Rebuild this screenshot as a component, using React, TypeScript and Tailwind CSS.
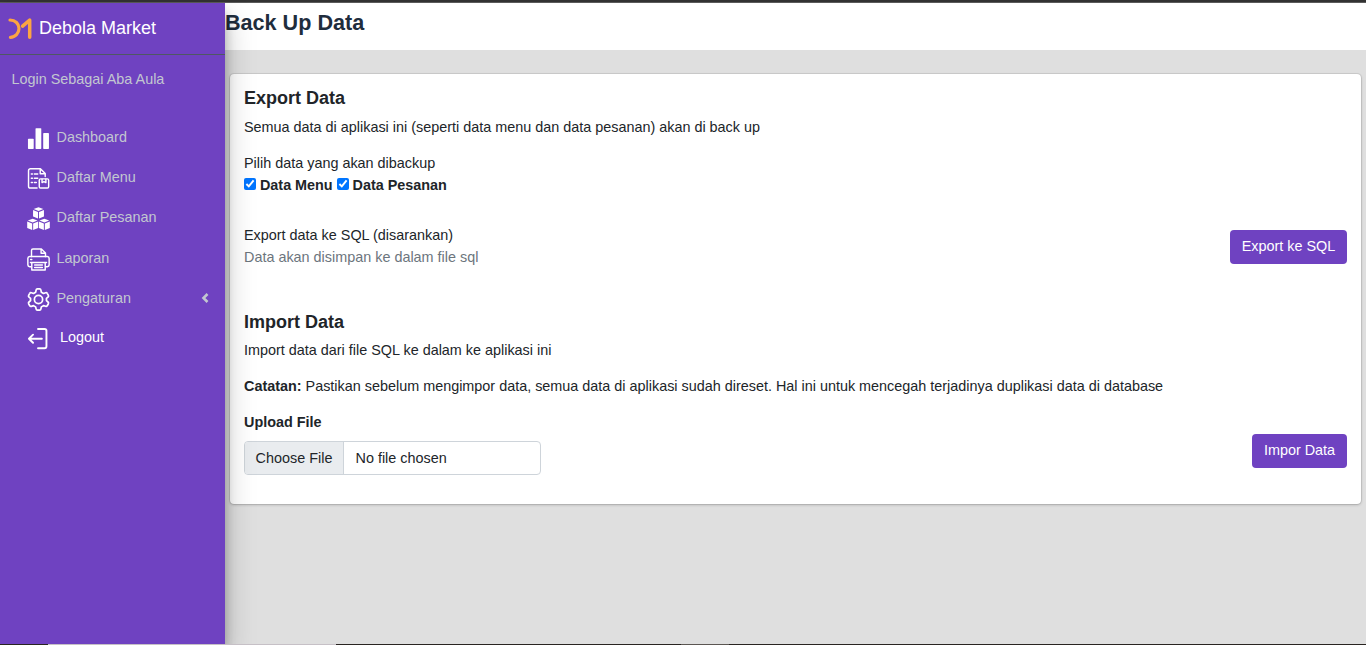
import type { ReactNode } from "react";

const svgProps = {
  width: 23,
  height: 23,
  viewBox: "0 0 24 24",
  fill: "none",
  stroke: "#fff",
  strokeLinecap: "round" as const,
  strokeLinejoin: "round" as const,
};

function Logo() {
  return (
    <svg width="24" height="22" viewBox="0 0 24 22" fill="none" stroke="#fca542" strokeWidth="3.5" strokeLinecap="round" strokeLinejoin="round">
      <path d="M2 2 C7.300 2 11 5.800 11 10.500 S7.300 19.300 2.400 19.300" strokeWidth="3.200" />
      <path d="M14.600 8.200 L21.700 2.200 V19.200" />
    </svg>
  );
}

function ChartIcon() {
  return (
    <svg {...svgProps} fill="#fff" stroke="none">
      <rect x="1" y="12.3" width="6" height="10.7" rx=".7" />
      <rect x="8.900" y="1.200" width="6" height="21.800" rx=".7" />
      <rect x="16.900" y="6.300" width="6" height="16.700" rx=".7" />
    </svg>
  );
}

function MenuListIcon() {
  return (
    <svg {...svgProps} strokeWidth="1.5">
      <path d="M10.500 22H3.600a2 2 0 0 1-2-2V3.800a2 2 0 0 1 2-2H14l5 5V10M13.800 2.100V7H18.800" />
      <path d="M4.500 7.300h1.200M7.700 7.300h3.500M4.500 11.700h1.200M7.700 11.700h3.500M4.500 16.200h1.200M7.700 16.200h2" />
      <rect x="12.800" y="12.400" width="9.800" height="9.600" rx="1.300" />
      <path d="M15.700 12.700v3.600l2-1.100 2 1.100v-3.600" />
    </svg>
  );
}

function Cube({ x, y }: { x: number; y: number }) {
  return (
    <g transform={`translate(${x} ${y})`}>
      <path d="M5.700 0 10.800 2 5.700 4.100.6 2z" />
      <path d="M0 3 5.200 5V11.800L0 9.800z" />
      <path d="M11.400 3 6.200 5V11.800L11.400 9.800z" />
    </g>
  );
}

function CubesIcon() {
  return (
    <svg {...svgProps} fill="#fff" stroke="none">
      <Cube x={6.3} y={0.2} />
      <Cube x={0.2} y={12.2} />
      <Cube x={12.4} y={12.2} />
    </svg>
  );
}

function PrinterIcon() {
  return (
    <svg {...svgProps} strokeWidth="1.5">
      <path d="M4.700 9V2.600a1.500 1.500 0 0 1 1.500-1.500H15L19.300 5.200V9M14.700 1.300V5.500H19" />
      <path d="M4.500 19.500H2.800A2 2 0 0 1 .9 17.600V10.800A2 2 0 0 1 2.800 8.900H21.200A2 2 0 0 1 23.100 10.800V17.600A2 2 0 0 1 21.200 19.500H19.400" />
      <path d="M3.600 15.200H20.400M5 15.200V23H19V15.200M8 17.800H16M8 20.400H16M3.800 12H5" />
    </svg>
  );
}

function GearIcon() {
  return (
    <svg {...svgProps} strokeWidth="1.800">
      <circle cx="12" cy="12" r="4.300" />
      <path d="M9.500 2.200Q9.700 1 10.800 1h2.400q1.100 0 1.300 1.200l.5 2.200 2.200 1.300 2.200-.7q1.200-.4 1.700.6l1.200 2.100q.5 1-.4 1.800l-1.600 1.400v2.300l1.600 1.400q.9.800.4 1.800l-1.200 2.100q-.5 1-1.700.6l-2.200-.7L15 19.700l-.5 2.100q-.2 1.200-1.300 1.200h-2.400q-1.100 0-1.300-1.200L9 19.700l-2.200-1.300-2.200.7q-1.200.4-1.700-.6l-1.200-2.100q-.5-1 .4-1.800l1.600-1.400v-2.300L2.100 9.500q-.9-.8-.4-1.800l1.200-2.100q.5-1 1.700-.6l2.200.7L9 4.400z" />
    </svg>
  );
}

function LogoutIcon() {
  return (
    <svg {...svgProps} strokeWidth="2">
      <path d="M11.500 2H18.300a2 2 0 0 1 2 2v16.200a2 2 0 0 1-2 2h-6.800" />
      <path d="M15.500 12.200H2.200M6.300 8 2 12.200 6.300 16.400" />
    </svg>
  );
}

function NavItem({ icon, label, arrow }: { icon: ReactNode; label: string; arrow?: boolean }) {
  return (
    <a className="flex h-[40.2px] items-center pl-[27px] pr-[16px] text-[#c2c7d0]">
      <span className="mt-[1.500px] block shrink-0">{icon}</span>
      <span className="ml-[6.500px]">{label}</span>
      {arrow && (
        <svg className="mb-[2px] ml-auto" width="8" height="10" viewBox="0 0 8 10" fill="none" stroke="#c2c7d0" strokeWidth="2.600">
          <path d="M6.500 1 2.500 5l4 4" />
        </svg>
      )}
    </a>
  );
}

function Check({ label }: { label: string }) {
  return (
    <label className="flex items-center gap-[4px] font-bold tracking-[-0.02px]">
      <input type="checkbox" defaultChecked className="m-0 mb-[3px] size-[12px] accent-[#0075ff]" />
      {label}
    </label>
  );
}

export default function App() {
  return (
    <div className="flex h-[645px] w-full flex-col overflow-hidden bg-[#dfdfdf] font-['Liberation_Sans',Arial,sans-serif] text-[14.4px] leading-[21.6px] text-[#212529]">
      <div className="h-[3px] shrink-0 border-b border-[#5b5b5b] bg-[#323232]" />
      <div className="flex min-h-0 flex-1">
        <aside className="z-10 w-[225px] shrink-0 bg-[#6f42c1] shadow-[0_14px_28px_rgba(0,0,0,0.25),0_10px_10px_rgba(0,0,0,0.22)]">
          <div className="flex h-[52px] items-center border-b border-[#4f5962] pl-[8px]">
            <Logo />
            <span className="ml-[7px] text-[18px] text-white">Debola Market</span>
          </div>
          <div className="pl-[11.500px] pt-[14px] text-[#c2c7d0]">Login Sebagai Aba Aula</div>
          <nav className="mt-[27.100px]">
            <NavItem icon={<ChartIcon />} label="Dashboard" />
            <NavItem icon={<MenuListIcon />} label="Daftar Menu" />
            <NavItem icon={<CubesIcon />} label="Daftar Pesanan" />
            <NavItem icon={<PrinterIcon />} label="Laporan" />
            <NavItem icon={<GearIcon />} label="Pengaturan" arrow />
            <button className="flex h-[38px] items-center pl-[27px] text-white">
              <span className="mt-[2px]"><LogoutIcon /></span>
              <span className="ml-[10px]">Logout</span>
            </button>
          </nav>
        </aside>
        <main className="flex min-w-0 flex-1 flex-col">
          <header className="h-[47px] shrink-0 bg-white pt-[6px]">
            <h1 className="text-[21.6px] font-bold leading-[27px] text-[#1f2d3d]">Back Up Data</h1>
          </header>
          <section className="ml-[5px] mr-[5px] mt-[24px] flex h-[430px] flex-col rounded-[4px] bg-white pl-[14px] pr-[14px] pt-[13px] shadow-[0_0_1px_rgba(0,0,0,0.13),0_1px_3px_rgba(0,0,0,0.2),0_0_0_1px_rgba(0,0,0,0.06)]">
            <h2 className="text-[18px] font-bold leading-[22px]">Export Data</h2>
            <p className="mt-[7px] leading-[22px]">Semua data di aplikasi ini (seperti data menu dan data pesanan) akan di back up</p>
            <p className="mt-[14px] leading-[22px]">Pilih data yang akan dibackup</p>
            <div className="flex gap-[4px] leading-[22px]">
              <Check label="Data Menu" />
              <Check label="Data Pesanan" />
            </div>
            <div className="mt-[28px] flex items-center justify-between leading-[22px]">
              <div>
                <p>Export data ke SQL (disarankan)</p>
                <p className="text-[#6c757d]">Data akan disimpan ke dalam file sql</p>
              </div>
              <button className="mt-[2px] h-[34px] w-[117px] rounded-[4px] bg-[#6f42c1] pb-[2px] text-white">Export ke SQL</button>
            </div>
            <h2 className="mt-[43px] text-[18px] font-bold leading-[22px]">Import Data</h2>
            <p className="mt-[6px] leading-[22px]">Import data dari file SQL ke dalam ke aplikasi ini</p>
            <p className="mt-[14px] leading-[22px]"><b>Catatan:</b> Pastikan sebelum mengimpor data, semua data di aplikasi sudah direset. Hal ini untuk mencegah terjadinya duplikasi data di database</p>
            <div className="mt-[14px] flex items-end justify-between leading-[22px]">
              <div>
                <p className="font-bold">Upload File</p>
                <div className="mt-[8px] flex h-[34px] w-[297px] items-stretch overflow-hidden rounded-[4px] border border-[#ced4da]">
                  <button className="w-[99px] whitespace-nowrap border-r border-[#ced4da] bg-[#e9ecef]">Choose File</button>
                  <span className="flex items-center pl-[11.500px]">No file chosen</span>
                </div>
              </div>
              <button className="mb-[7px] h-[34px] w-[95px] rounded-[4px] bg-[#6f42c1] pb-[2px] text-white">Impor Data</button>
            </div>
          </section>
        </main>
      </div>
      <div className="z-20 flex h-px shrink-0 bg-[#292421]">
        <span className="ml-[48px] w-[288px] bg-[#c6c0c6]" />
        <span className="ml-[345px] w-[48px] bg-[#5b5652]" />
      </div>
    </div>
  );
}
